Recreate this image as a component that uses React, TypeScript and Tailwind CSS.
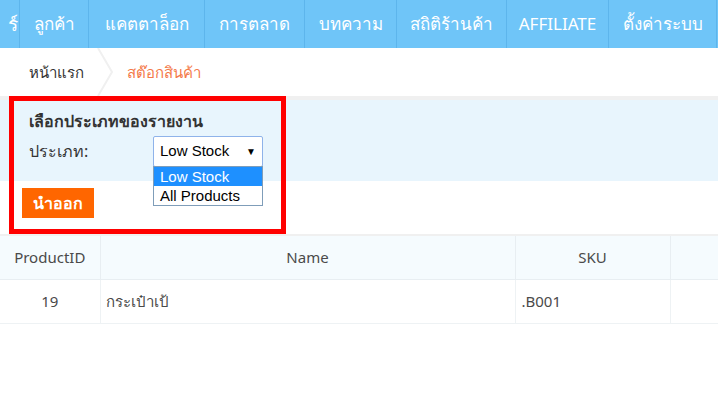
import React from 'react';

const navItems = [
  { label: 'ร์', w: 'w-[20px]', clip: true },
  { label: 'ลูกค้า', w: 'w-[69px]' },
  { label: 'แคตตาล็อก', w: 'w-[116px]' },
  { label: 'การตลาด', w: 'w-[100px]' },
  { label: 'บทความ', w: 'w-[92px]' },
  { label: 'สถิติร้านค้า', w: 'w-[110px]' },
  { label: 'AFFILIATE', w: 'w-[102px]' },
  { label: 'ตั้งค่าระบบ', w: 'w-[108px]' },
];

const font = { fontFamily: 'Tahoma, "Noto Sans", "DejaVu Sans", sans-serif' };
const arial = { fontFamily: '"Liberation Sans", Arial, sans-serif' };

const App: React.FC = () => {
  return (
    <div className="w-[718px] h-[393px] bg-white overflow-hidden text-[#333]" style={font}>
      {/* Top menu */}
      <nav className="flex h-[48px] bg-[#6fc5f8] overflow-hidden">
        {navItems.map((item, i) => (
          <div
            key={i}
            className={`${item.w} shrink-0 h-full flex items-center ${item.clip ? 'justify-end pr-[1px] text-[19px]' : 'justify-center text-[17px]'} border-r border-[#5db5ec] whitespace-nowrap text-white`}
          >
            {item.label}
          </div>
        ))}
        <div className="flex-1" />
      </nav>

      {/* Breadcrumb */}
      <div className="flex items-center h-[48px] text-[15px]">
        <span className="pl-[29px] text-[#333]">หน้าแรก</span>
        <svg width="30" height="48" viewBox="0 0 30 48" className="ml-[12px] shrink-0">
          <polyline points="2,0 16,24 2,48" fill="none" stroke="#f0f0f0" strokeWidth="2" />
        </svg>
        <span className="ml-[1px] text-[#f47a4a]">สต๊อกสินค้า</span>
      </div>

      {/* Report filter */}
      <div className="relative border-t-[4px] border-[#f0f0f0]">
        <div className="bg-[#e8f5fd] h-[81px] pt-[9px]">
          <div className="pl-[29px] font-bold text-[16px] leading-[24px] text-[#333]">เลือกประเภทของรายงาน</div>
          <div className="flex items-center mt-[3px] h-[30px]">
            <span className="pl-[29px] w-[153px] text-[16px] text-[#333]">ประเภท:</span>
            <div className="relative w-[110px] h-[31px]">
              <div className="h-full bg-white border border-[#8fb3ea] rounded-[2px] flex items-center justify-between px-[6px] text-[15px] text-black" style={arial}>
                <span>Low Stock</span>
                <span className="text-[10px]">▼</span>
              </div>
              {/* open dropdown list */}
              <div className="absolute left-0 top-[30px] w-[110px] bg-white border border-[#7f9db9] z-10 text-[15px] leading-[19px] text-black" style={arial}>
                <div className="bg-[#1e90ff] text-white px-[6px]">Low Stock</div>
                <div className="px-[6px]">All Products</div>
              </div>
            </div>
          </div>
        </div>
        <div className="h-[53px] pl-[22px] pt-[7px]">
          <button className="w-[72px] h-[30px] bg-[#ff6600] text-white font-bold text-[16px]">นำออก</button>
        </div>
        {/* red highlight frame */}
        <div className="absolute -top-[4px] bottom-0 left-[9px] w-[277px] border-[5px] border-[#ff0000] pointer-events-none z-20" />
      </div>

      {/* Table */}
      <div className="border-t-[2px] border-[#f0f0f0]">
        <table className="w-[718px] border-collapse text-[15px] text-[#4a4a4a]" style={{ fontFamily: '"Noto Sans", "DejaVu Sans Condensed", sans-serif' }}>
          <thead>
            <tr className="h-[43px] bg-[#f5fbfe]">
              <th className="w-[100px] font-normal border-r border-b border-[#e8eef2]">ProductID</th>
              <th className="w-[415px] font-normal border-r border-b border-[#e8eef2]">Name</th>
              <th className="w-[155px] font-normal border-r border-b border-[#e8eef2]">SKU</th>
              <th className="font-normal border-b border-[#e8eef2]"></th>
            </tr>
          </thead>
          <tbody>
            <tr className="h-[44px]">
              <td className="text-center border-r border-b border-[#eef2f4]">19</td>
              <td className="pl-[5px] border-r border-b border-[#eef2f4]">กระเป๋าเป้</td>
              <td className="pl-[6px] border-r border-b border-[#eef2f4]">.B001</td>
              <td className="border-b border-[#eef2f4]"></td>
            </tr>
          </tbody>
        </table>
      </div>
    </div>
  );
};

export default App;
